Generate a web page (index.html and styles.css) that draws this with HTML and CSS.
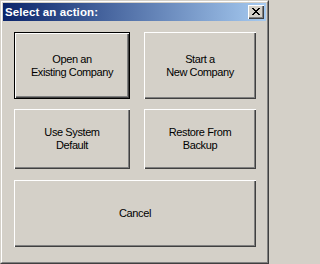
FILE: index.html
```html
<!DOCTYPE html>
<html>
<head>
<meta charset="utf-8">
<link rel="stylesheet" href="styles.css">
</head>
<body>
<div class="window">
  <div class="frame">
    <div class="titlebar">
      <span class="title">Select an action:</span>
      <button class="close" aria-label="Close">
        <svg width="8" height="7" viewBox="0 0 8 7" shape-rendering="crispEdges">
          <path fill="#000" d="M0 0h2v1H0zM6 0h2v1H6zM1 1h2v1H1zM5 1h2v1H5zM2 2h4v1H2zM3 3h2v1H3zM2 4h4v1H2zM1 5h2v1H1zM5 5h2v1H5zM0 6h2v1H0zM6 6h2v1H6z"/>
        </svg>
      </button>
    </div>
    <div class="content">
      <button class="btn default">Open an<br>Existing Company</button>
      <button class="btn">Start a<br>New Company</button>
      <button class="btn">Use System<br>Default</button>
      <button class="btn">Restore From<br>Backup</button>
      <button class="btn cancel">Cancel</button>
    </div>
  </div>
</div>
</body>
</html>
```
FILE: styles.css
```css
html, body {
  margin: 0;
  padding: 0;
  background: #d4d0c8;
}
.window {
  width: 269px;
  height: 264px;
  box-sizing: border-box;
  border: 1px solid;
  border-color: #d4d0c8 #404040 #404040 #d4d0c8;
  background: #d4d0c8;
}
.frame {
  height: 100%;
  box-sizing: border-box;
  border: 1px solid;
  border-color: #ffffff #808080 #808080 #ffffff;
  padding: 1px;
}
.titlebar {
  height: 18px;
  display: flex;
  align-items: center;
  justify-content: space-between;
  padding: 0 2px 0 2px;
  background: linear-gradient(to right, #0a246a, #a6caf0);
}
.title {
  color: #fff;
  font-family: "Liberation Sans", Arial, sans-serif;
  font-weight: bold;
  font-size: 11.5px;
  letter-spacing: 0.1px;
}
.close {
  width: 16px;
  height: 14px;
  padding: 0;
  margin: 0;
  border: none;
  background: #d4d0c8;
  box-shadow: inset 1px 1px #ffffff, inset -1px -1px #404040, inset -2px -2px #808080;
  display: flex;
  align-items: center;
  justify-content: center;
}
.close svg { display: block; margin: 0 1px 1px 0; }
.content {
  display: grid;
  grid-template-columns: 116px 112px;
  grid-template-rows: 67px 60px 68px;
  column-gap: 14px;
  row-gap: 10px;
  padding: 11px 0 0 11px;
}
.btn {
  margin: 0;
  padding: 0;
  border: none;
  background: #d4d0c8;
  color: #000;
  font-family: "Liberation Sans", Arial, sans-serif;
  font-size: 11px;
  line-height: 13px;
  letter-spacing: -0.4px;
  text-align: center;
  box-shadow: inset 1px 1px #ffffff, inset -1px -1px #404040, inset -2px -2px #808080;
}
.btn.default {
  border: 1px solid #000;
}
.btn.cancel {
  grid-column: 1 / 3;
  margin-top: 1px;
}
```
